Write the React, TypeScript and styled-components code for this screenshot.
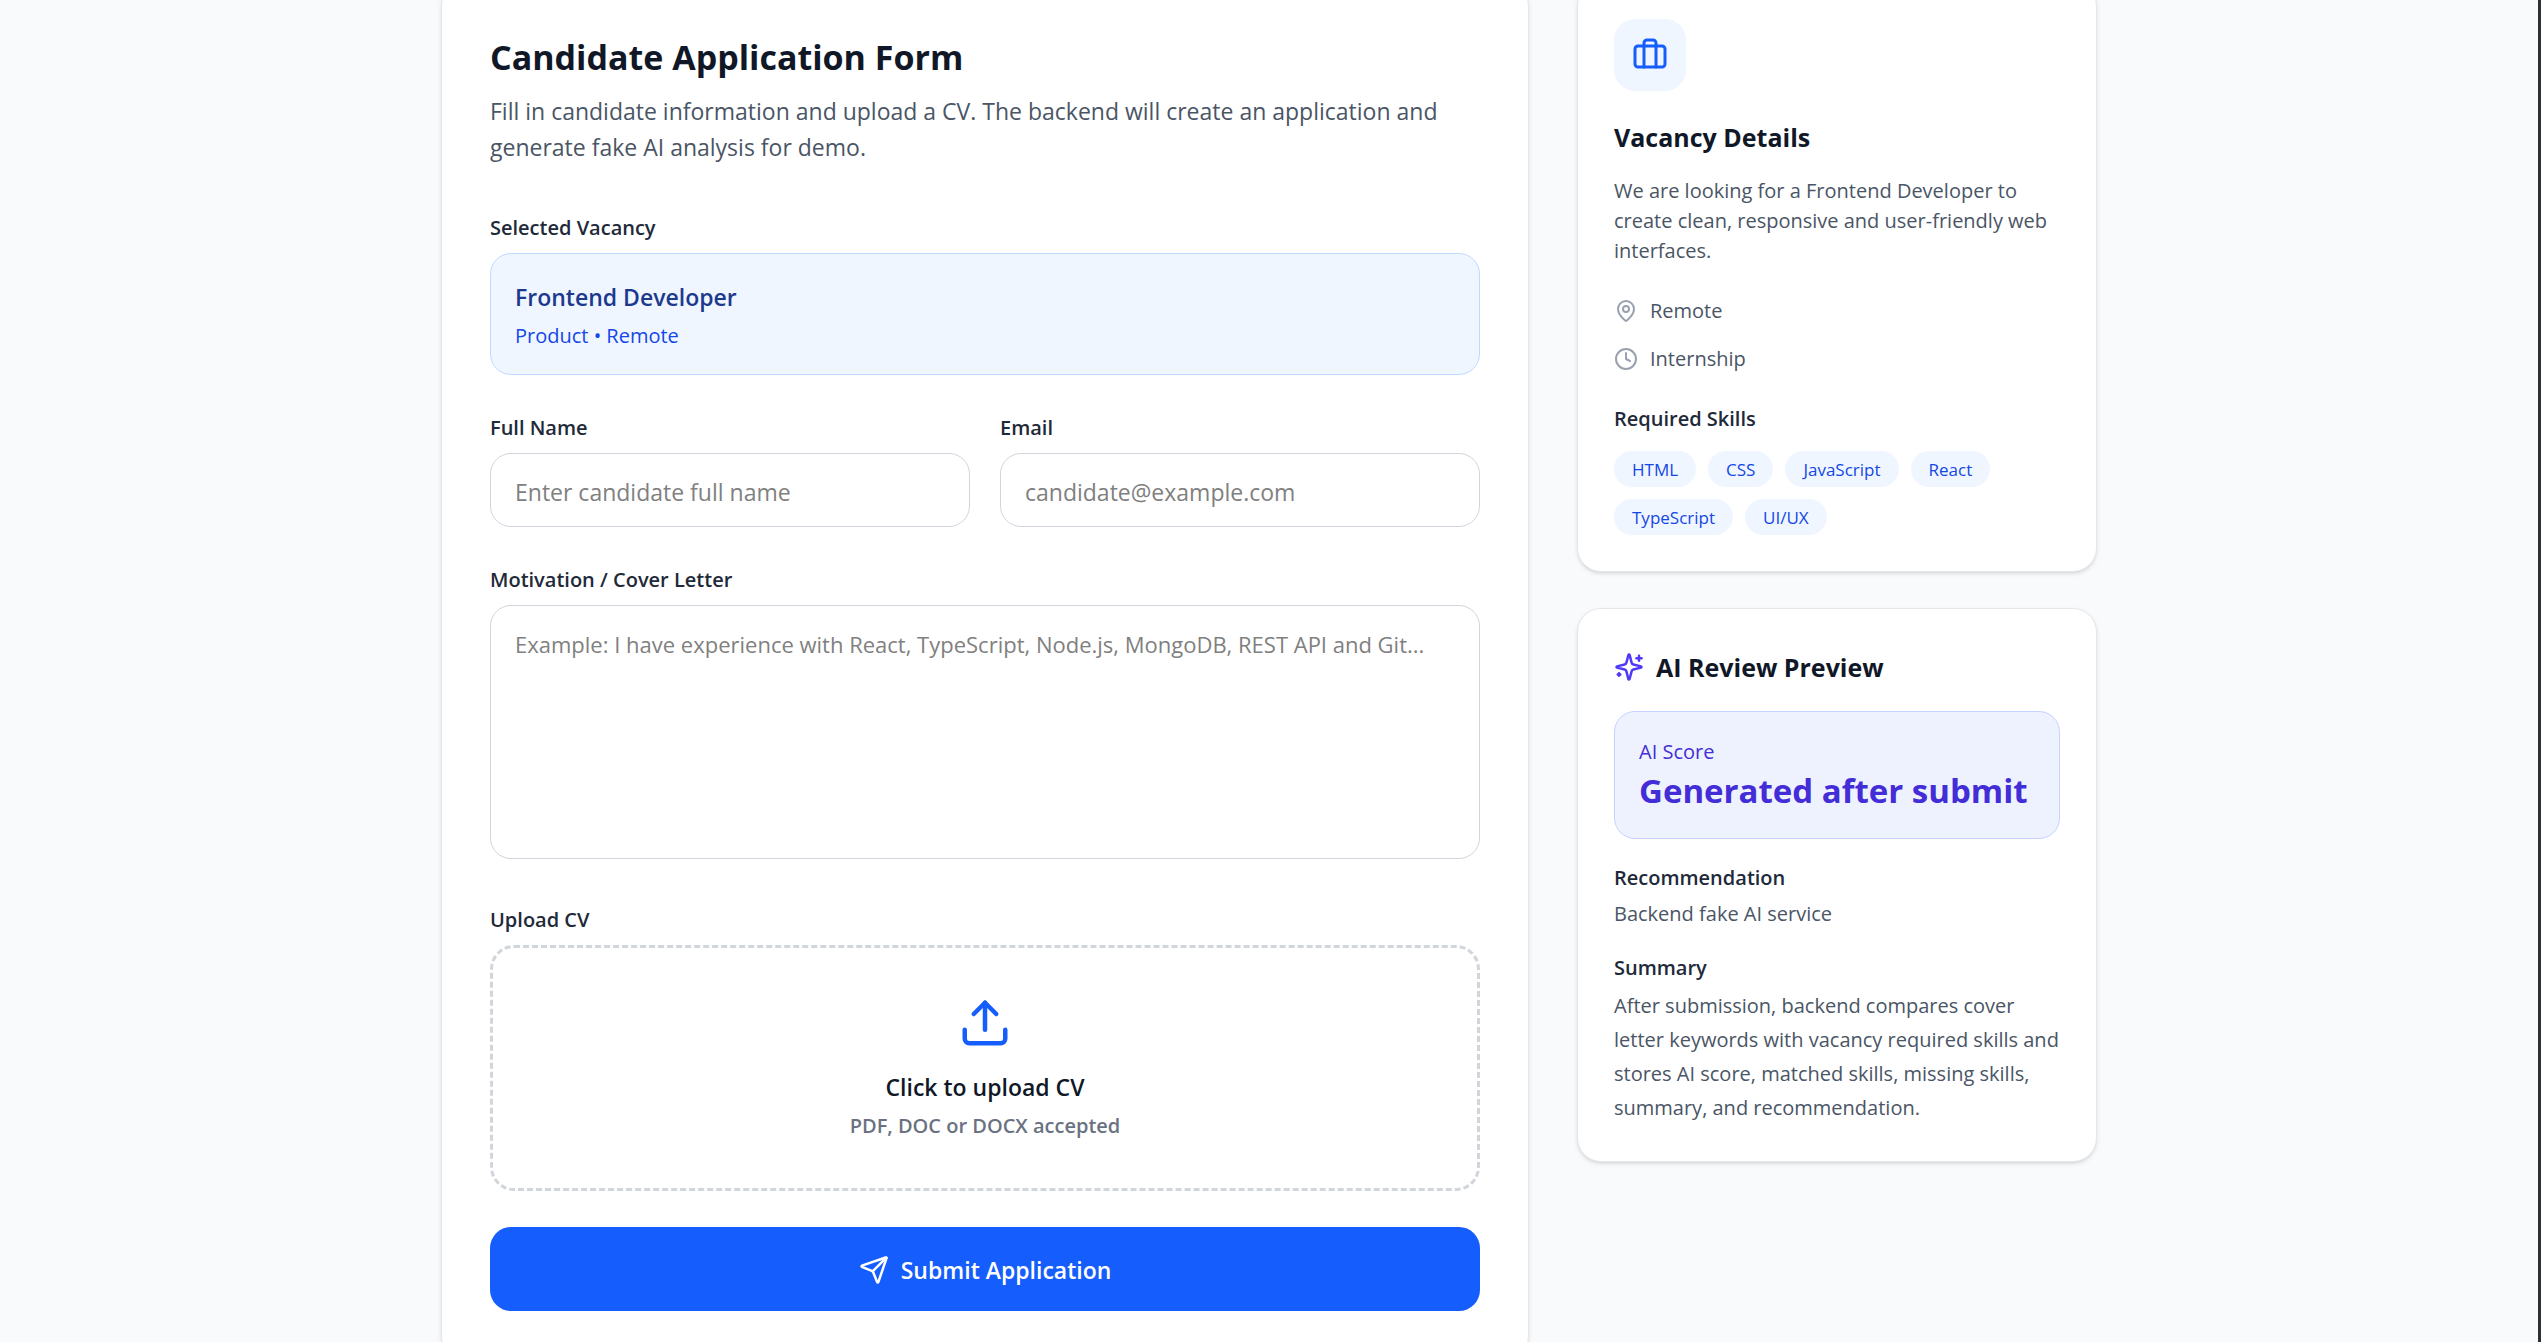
import React from 'react';
import styled, { createGlobalStyle } from 'styled-components';
import { Briefcase, Clock, MapPin, Send, Upload } from 'lucide-react';

const GlobalStyle = createGlobalStyle`
  *, *::before, *::after { box-sizing: border-box; }
  body {
    margin: 0;
    background: #f9fafc;
    color: #101828;
    font-family: 'Segoe UI', 'Open Sans', 'Noto Sans', sans-serif;
    font-size: 23px;
    line-height: 36px;
  }
  h1, h2, h3, p, ul { margin: 0; padding: 0; }
  input, textarea, button { font: inherit; color: inherit; }
`;

const Page = styled.div`
  height: 100vh;
  overflow: hidden;
  border-right: 3px solid #2a3033;
`;

const Layout = styled.main`
  display: grid;
  grid-template-columns: repeat(3, minmax(0, 1fr));
  align-items: start;
  gap: 48px;
  max-width: 1728px;
  margin: -18px auto 0;
  padding: 0 36px 48px;

  @media (max-width: 1200px) {
    grid-template-columns: minmax(0, 1fr);
  }
`;

const Card = styled.section<{ $roomy?: boolean }>`
  padding: ${(p) => (p.$roomy ? 48 : 36)}px;
  background: #fff;
  border: 1px solid #e5e7eb;
  border-radius: 24px;
  box-shadow: 0 2px 4px rgba(0, 0, 0, 0.1), 0 2px 3px -2px rgba(0, 0, 0, 0.1);
`;

const FormCard = styled(Card)`
  grid-column: span 2;

  @media (max-width: 1200px) {
    grid-column: auto;
  }
`;

const Sidebar = styled.aside`
  display: grid;
  grid-template-columns: minmax(0, 1fr);
  gap: 36px;
`;

const PageTitle = styled.h1`
  padding-top: 2px;
  font-size: 34px;
  line-height: 48px;
  font-weight: 700;
`;

const Intro = styled.p`
  margin-top: 12px;
  color: #4a5565;
`;

const Form = styled.form`
  display: grid;
  gap: 36px;
  margin-top: 46px;
`;

const FieldPair = styled.div`
  display: grid;
  grid-template-columns: repeat(2, minmax(0, 1fr));
  gap: 30px;
`;

const Field = styled.div<{ $spaced?: boolean }>`
  display: flex;
  flex-direction: column;
  gap: 10px;
  min-width: 0;
  padding-bottom: ${(p) => (p.$spaced ? 8 : 0)}px;
`;

const Label = styled.label`
  padding-top: 2px;
  color: #1e2939;
  font-size: 20px;
  line-height: 30px;
  font-weight: 600;
`;

const VacancyBox = styled.div`
  padding: 25px 24px 23px;
  background: #eff6ff;
  border: 1px solid #bedbff;
  border-radius: 21px;
`;

const VacancyName = styled.p`
  color: #1c398e;
  font-weight: 600;
`;

const VacancyMeta = styled.p`
  margin-top: 6px;
  color: #1447e6;
  font-size: 20px;
  line-height: 30px;
`;

const TextInput = styled.input`
  width: 100%;
  height: 74px;
  padding: 20px 24px 16px;
  background: #fff;
  border: 1px solid #d1d5dc;
  border-radius: 21px;

  &::placeholder { color: #808080; opacity: 1; }
`;

const TextArea = styled.textarea`
  display: block;
  width: 100%;
  padding: 20px 24px 16px;
  background: #fff;
  border: 1px solid #d1d5dc;
  border-radius: 21px;
  font-size: 22px;
  line-height: 36px;
  resize: none;

  &::placeholder { color: #808080; opacity: 1; }
`;

const DropZone = styled.label`
  display: flex;
  flex-direction: column;
  align-items: center;
  padding: 48px 48px 47px;
  border: 3px dashed #d1d5dc;
  border-radius: 24px;
  text-align: center;
  cursor: pointer;

  svg { color: #155dfc; }
`;

const HiddenFile = styled.input`
  position: absolute;
  width: 1px;
  height: 1px;
  opacity: 0;
`;

const DropTitle = styled.span`
  margin-top: 19px;
  font-weight: 600;
`;

const DropHint = styled.span`
  margin-top: 6px;
  color: #6a7282;
  font-size: 20px;
  line-height: 30px;
  font-weight: 600;
`;

const SubmitButton = styled.button`
  display: flex;
  align-items: center;
  justify-content: center;
  gap: 12px;
  padding: 25px 24px 23px;
  background: #155dfc;
  border: 0;
  border-radius: 21px;
  color: #fff;
  font-weight: 600;
  cursor: pointer;
`;

const IconTile = styled.div`
  display: grid;
  place-items: center;
  width: 72px;
  height: 72px;
  margin-bottom: 24px;
  background: #eff6ff;
  border-radius: 21px;
  color: #155dfc;
`;

const CardTitle = styled.h2`
  display: flex;
  align-items: center;
  gap: 12px;
  padding-top: 1px;
  font-size: 25px;
  line-height: 42px;
  font-weight: 700;

  svg { color: #4f39f6; }
`;

const Description = styled.p`
  margin-top: 18px;
  color: #4a5565;
  font-size: 20px;
  line-height: 30px;
`;

const Facts = styled.ul`
  display: grid;
  gap: 18px;
  margin-top: 30px;
  list-style: none;
`;

const Fact = styled.li`
  display: flex;
  align-items: center;
  gap: 12px;
  color: #4a5565;
  font-size: 20px;
  line-height: 30px;

  svg { color: #99a1af; }
`;

const SubHeading = styled.h3<{ $top: number }>`
  margin-top: ${(p) => p.$top}px;
  color: #1e2939;
  font-size: 20px;
  line-height: 30px;
  font-weight: 600;
`;

const Skills = styled.ul`
  display: flex;
  flex-wrap: wrap;
  gap: 12px;
  margin-top: 17px;
  list-style: none;
`;

const Skill = styled.li`
  padding: 7px 18px 5px;
  background: #eff6ff;
  border-radius: 18px;
  color: #1447e6;
  font-size: 17px;
  line-height: 24px;
`;

const ScoreBox = styled.div`
  margin-top: 23px;
  padding: 25px 24px 23px;
  background: #eef2ff;
  border: 1px solid #c6d2ff;
  border-radius: 21px;
  color: #432dd7;
`;

const ScoreLabel = styled.p`
  font-size: 20px;
  line-height: 30px;
`;

const ScoreValue = styled.p`
  font-size: 33px;
  line-height: 48px;
  font-weight: 700;
  white-space: nowrap;
`;

const Detail = styled.p<{ $relaxed?: boolean }>`
  margin-top: 6px;
  color: #4a5565;
  font-size: 20px;
  line-height: ${(p) => (p.$relaxed ? 34 : 30)}px;
`;

const SparklesIcon = ({ size }: { size: number }) => (
  <svg
    width={size}
    height={size}
    viewBox="0 0 24 24"
    fill="none"
    stroke="currentColor"
    strokeWidth="2"
    strokeLinecap="round"
    strokeLinejoin="round"
    aria-hidden="true"
  >
    <path d="M9.937 15.5A2 2 0 0 0 8.5 14.063l-6.135-1.582a.5.5 0 0 1 0-.962L8.5 9.936A2 2 0 0 0 9.937 8.5l1.582-6.135a.5.5 0 0 1 .963 0L14.063 8.5A2 2 0 0 0 15.5 9.937l6.135 1.581a.5.5 0 0 1 0 .964L15.5 14.063a2 2 0 0 0-1.437 1.437l-1.582 6.135a.5.5 0 0 1-.963 0z" />
    <path d="M20 3v4" />
    <path d="M22 5h-4" />
    <path d="M4 17v2" />
    <path d="M5 18H3" />
  </svg>
);

const skills = ['HTML', 'CSS', 'JavaScript', 'React', 'TypeScript', 'UI/UX'];

export default function App() {
  return (
    <>
      <GlobalStyle />
      <Page>
        <Layout>
          <FormCard $roomy>
            <PageTitle>Candidate Application Form</PageTitle>
            <Intro>
              Fill in candidate information and upload a CV. The backend will create an application and generate
              fake AI analysis for demo.
            </Intro>
            <Form onSubmit={(e: React.FormEvent) => e.preventDefault()}>
              <Field>
                <Label as="span">Selected Vacancy</Label>
                <VacancyBox>
                  <VacancyName>Frontend Developer</VacancyName>
                  <VacancyMeta>Product • Remote</VacancyMeta>
                </VacancyBox>
              </Field>
              <FieldPair>
                <Field>
                  <Label htmlFor="name">Full Name</Label>
                  <TextInput id="name" type="text" placeholder="Enter candidate full name" />
                </Field>
                <Field>
                  <Label htmlFor="email">Email</Label>
                  <TextInput id="email" type="email" placeholder="candidate@example.com" />
                </Field>
              </FieldPair>
              <Field $spaced>
                <Label htmlFor="letter">Motivation / Cover Letter</Label>
                <TextArea
                  id="letter"
                  rows={6}
                  placeholder="Example: I have experience with React, TypeScript, Node.js, MongoDB, REST API and Git..."
                />
              </Field>
              <Field>
                <Label htmlFor="cv">Upload CV</Label>
                <DropZone htmlFor="cv">
                  <Upload size={54} />
                  <DropTitle>Click to upload CV</DropTitle>
                  <DropHint>PDF, DOC or DOCX accepted</DropHint>
                  <HiddenFile id="cv" type="file" accept=".pdf,.doc,.docx" />
                </DropZone>
              </Field>
              <SubmitButton type="submit">
                <Send size={30} />
                Submit Application
              </SubmitButton>
            </Form>
          </FormCard>

          <Sidebar>
            <Card>
              <IconTile>
                <Briefcase size={36} />
              </IconTile>
              <CardTitle>Vacancy Details</CardTitle>
              <Description>
                We are looking for a Frontend Developer to create clean, responsive and user-friendly web interfaces.
              </Description>
              <Facts>
                <Fact>
                  <MapPin size={24} />
                  Remote
                </Fact>
                <Fact>
                  <Clock size={24} />
                  Internship
                </Fact>
              </Facts>
              <SubHeading $top={30}>Required Skills</SubHeading>
              <Skills>
                {skills.map((skill) => (
                  <Skill key={skill}>{skill}</Skill>
                ))}
              </Skills>
            </Card>

            <Card>
              <CardTitle>
                <SparklesIcon size={30} />
                AI Review Preview
              </CardTitle>
              <ScoreBox>
                <ScoreLabel>AI Score</ScoreLabel>
                <ScoreValue>Generated after submit</ScoreValue>
              </ScoreBox>
              <SubHeading $top={24}>Recommendation</SubHeading>
              <Detail>Backend fake AI service</Detail>
              <SubHeading $top={24}>Summary</SubHeading>
              <Detail $relaxed>
                After submission, backend compares cover letter keywords with vacancy required skills and stores AI
                score, matched skills, missing skills, summary, and recommendation.
              </Detail>
            </Card>
          </Sidebar>
        </Layout>
      </Page>
    </>
  );
}
